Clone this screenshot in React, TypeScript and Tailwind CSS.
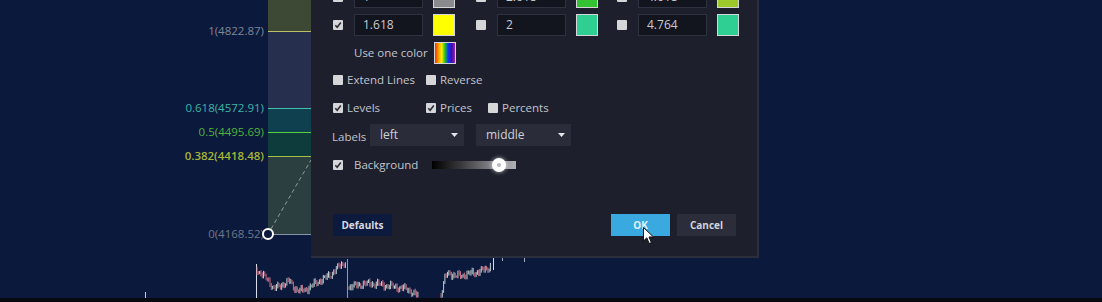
import React from 'react';

const font = { fontFamily: '"Open Sans", "Liberation Sans", sans-serif' };

const Check = ({ checked }: { checked?: boolean }) => (
  <span className="flex h-[10px] w-[10px] shrink-0 items-center justify-center rounded-[1px] bg-[#d6d6d8]">
    {checked && (
      <svg width="8" height="8" viewBox="0 0 8 8">
        <path d="M1.3 4.2 L3.2 6.2 L6.8 1.6" fill="none" stroke="#2b2d36" strokeWidth="1.6" />
      </svg>
    )}
  </span>
);

type Level = { checked: boolean; value: string; color: string };

const levels: Level[] = [
  { checked: false, value: '1', color: 'bg-[#8a8a8c]' },
  { checked: false, value: '2.618', color: 'bg-[#34c232]' },
  { checked: false, value: '4.618', color: 'bg-[#9cc82a]' },
  { checked: true, value: '1.618', color: 'bg-[#ffff00]' },
  { checked: false, value: '2', color: 'bg-[#2fcf94]' },
  { checked: false, value: '4.764', color: 'bg-[#2fcf94]' },
];

const LevelCell = ({ level }: { level: Level }) => (
  <div className="flex h-[22px] items-center">
    <Check checked={level.checked} />
    <div className="ml-[11px] flex h-[22px] w-[69px] items-center border border-[#2e3140] bg-[#12141e] pl-[8px] text-[12px] text-[#c9cbd2]">
      {level.value}
    </div>
    <div className={`ml-[10px] h-[22px] w-[22px] border border-[#d4d6dc] ${level.color}`} />
  </div>
);

const Select = ({ value, width }: { value: string; width: string }) => (
  <div className={`flex h-[22px] items-center justify-between bg-[#2a2c3a] pl-[10px] pr-[6px] text-[12px] text-[#cfd1d8] ${width}`}>
    <span>{value}</span>
    <svg width="7" height="4" viewBox="0 0 7 4">
      <path d="M0 0 H7 L3.5 4 Z" fill="#e4e5ea" />
    </svg>
  </div>
);

const FibLabel = ({ y, text, color }: { y: number; text: string; color: string }) => (
  <div className={`absolute right-[838px] text-[11.5px] leading-[16px] ${color}`} style={{ top: y - 8 }}>
    {text}
  </div>
);

// price path key points for the mini chart under the dialog
const segA: [number, number][] = [
  [257, 270], [262, 276], [268, 280], [274, 290], [280, 286], [290, 282], [295, 289], [300, 292],
  [310, 288], [318, 282], [325, 279], [332, 274], [338, 268], [346, 262],
];
const segB: [number, number][] = [
  [349, 288], [360, 285], [372, 284], [385, 286], [398, 288], [408, 290], [418, 297],
];
const segC: [number, number][] = [
  [441, 296], [444, 282], [448, 273], [456, 277], [466, 275], [476, 273], [486, 270], [491, 266],
];

const interp = (pts: [number, number][], x: number) => {
  for (let i = 0; i < pts.length - 1; i++) {
    const [x0, y0] = pts[i];
    const [x1, y1] = pts[i + 1];
    if (x >= x0 && x <= x1) return y0 + ((y1 - y0) * (x - x0)) / (x1 - x0 || 1);
  }
  return pts[pts.length - 1][1];
};

const candles = (pts: [number, number][], seed: number) => {
  const out: { x: number; y1: number; y2: number; up: boolean }[] = [];
  const start = pts[0][0];
  const end = pts[pts.length - 1][0];
  let prev = interp(pts, start);
  for (let x = start; x <= end; x += 1.3) {
    const base = interp(pts, x) + Math.sin(x * 1.37 + seed) * 2 + Math.sin(x * 0.51 + seed * 2) * 1.8;
    const h = 1 + Math.abs(Math.sin(x * 2.9 + seed)) * 2.2;
    out.push({ x, y1: Math.min(base, prev) - h, y2: Math.max(base, prev) + h * 0.5, up: base < prev });
    prev = base;
  }
  return out;
};

const allCandles = [...candles(segA, 1), ...candles(segB, 3), ...candles(segC, 5)];

const App = () => {
  return (
    <div className="flex h-[302px] w-[1102px] flex-col overflow-hidden bg-[#0b193d]" style={font}>
      <div className="relative h-[298px]">
        {/* fib zone */}
        <div className="absolute left-[268px] top-0 flex w-[43px] flex-col">
          <div className="h-[31px] bg-[#3d4934]" />
          <div className="h-[77px] border-t border-[#b9c06a] bg-[#262f4e]" />
          <div className="h-[24px] border-t border-[#44bfae] bg-[#0f4050]" />
          <div className="h-[24px] border-t border-[#58cf3e] bg-[#0e3c3c]" />
          <div className="h-[78px] border-t border-[#a8c040] bg-[#2b3e40]" />
          <div className="h-0 border-t border-[#8796a6]" />
        </div>

        <FibLabel y={31} text="1(4822.87)" color="text-[#7f8798]" />
        <FibLabel y={108} text="0.618(4572.91)" color="text-[#3fb6a6]" />
        <FibLabel y={132} text="0.5(4495.69)" color="text-[#4db53a]" />
        <FibLabel y={156} text="0.382(4418.48)" color="font-semibold text-[#a6b636]" />
        <FibLabel y={234} text="0(4168.52)" color="text-[#6f7789]" />

        <svg className="absolute left-0 top-0" width="1102" height="298">
          <line x1="271" y1="229" x2="311" y2="160" stroke="#8fa098" strokeWidth="1" strokeDasharray="4 3" />
          <line x1="145.5" y1="292" x2="145.5" y2="298" stroke="#c8ccd8" strokeWidth="1" />
          <line x1="256.5" y1="264" x2="256.5" y2="298" stroke="#d8dce6" strokeWidth="1" />
          <line x1="347.5" y1="259" x2="347.5" y2="298" stroke="#e07a8a" strokeWidth="1" />
          <line x1="493.5" y1="256" x2="493.5" y2="270" stroke="#d8dce6" strokeWidth="1" />
          <line x1="502.5" y1="257" x2="502.5" y2="261" stroke="#a8acb8" strokeWidth="1" />
          <line x1="524.5" y1="258" x2="524.5" y2="262" stroke="#a8acb8" strokeWidth="1" />
          {allCandles.map((c, i) => (
            <line
              key={i}
              x1={c.x}
              x2={c.x}
              y1={c.y1}
              y2={Math.min(c.y2, 298)}
              stroke={c.up ? '#cfe3dc' : '#d9788c'}
              strokeWidth="0.9"
            />
          ))}
        </svg>

        <div className="absolute left-[262px] top-[228px] h-[12px] w-[12px] rounded-full border-2 border-white bg-[#0b193d]" />

        {/* dialog */}
        <div className="absolute left-[311px] top-[-20px] flex h-[278px] w-[448px] flex-col border-b-2 border-r-2 border-[#2b2e3c] bg-[#1d1f2c] pl-[22px] pr-[21px] pt-[6px] text-[11.5px] text-[#c3c5cd]">
          <div className="grid grid-cols-[143px_141px_auto] gap-y-[6px]">
            {levels.map((l, i) => (
              <LevelCell key={i} level={l} />
            ))}
          </div>

          <div className="mt-[6px] flex h-[22px] items-center pl-[21px]">
            <span className="w-[80px]">Use one color</span>
            <div className="h-[22px] w-[22px] border border-[#d4d6dc] bg-[linear-gradient(to_right,#ff2a00,#ff9a00,#ffee00,#20c020,#1030ff,#3a10a0,#a020c0)]" />
          </div>

          <div className="mt-[8px] flex h-[16px] items-center">
            <div className="flex w-[93px] items-center gap-[4px]">
              <Check />
              <span>Extend Lines</span>
            </div>
            <div className="flex items-center gap-[4px]">
              <Check />
              <span>Reverse</span>
            </div>
          </div>

          <div className="mt-[12px] flex h-[16px] items-center">
            <div className="flex w-[93px] items-center gap-[4px]">
              <Check checked />
              <span>Levels</span>
            </div>
            <div className="flex w-[62px] items-center gap-[4px]">
              <Check checked />
              <span>Prices</span>
            </div>
            <div className="flex items-center gap-[4px]">
              <Check />
              <span>Percents</span>
            </div>
          </div>

          <div className="mt-[8px] flex h-[22px] items-center">
            <span className="-ml-[1px] mt-[4px] w-[38px]">Labels</span>
            <Select value="left" width="w-[94px]" />
            <div className="w-[12px]" />
            <Select value="middle" width="w-[95px]" />
          </div>

          <div className="mt-[11px] flex h-[16px] items-center">
            <Check checked />
            <span className="ml-[11px] w-[78px]">Background</span>
            <div className="relative h-[8px] w-[84px] bg-[linear-gradient(to_right,#000000,#3a3a3e_35%,#8a8a90_75%,#b0b0b4)]">
              <div className="absolute left-[60px] top-[-3px] flex h-[14px] w-[14px] items-center justify-center rounded-full bg-white shadow-[0_0_4px_rgba(255,255,255,0.7)]">
                <div className="h-[4px] w-[4px] rounded-full bg-[#b8b8be]" />
              </div>
            </div>
          </div>

          <div className="mt-[41px] flex h-[22px] items-center justify-between text-[10px] font-bold">
            <div className="flex h-[22px] w-[59px] items-center justify-center bg-[#0c1a3e] text-[#d6d9e2]">Defaults</div>
            <div className="flex gap-[7px]">
              <div className="flex h-[22px] w-[59px] items-center justify-center bg-[#3aa9df] text-[#dff1fb]">OK</div>
              <div className="flex h-[22px] w-[59px] items-center justify-center bg-[#2b2d3a] text-[#d2d4db]">Cancel</div>
            </div>
          </div>
        </div>

        {/* cursor */}
        <svg className="absolute left-[643px] top-[227px]" width="12" height="18" viewBox="0 0 12 18">
          <path d="M0.5 0.5 L0.5 14 L3.8 10.8 L6.2 16.5 L8.4 15.6 L6 10 L10.5 10 Z" fill="#ffffff" stroke="#111111" strokeWidth="1" />
        </svg>
      </div>
      <div className="h-[4px] bg-[#080a12]" />
    </div>
  );
};

export default App;
